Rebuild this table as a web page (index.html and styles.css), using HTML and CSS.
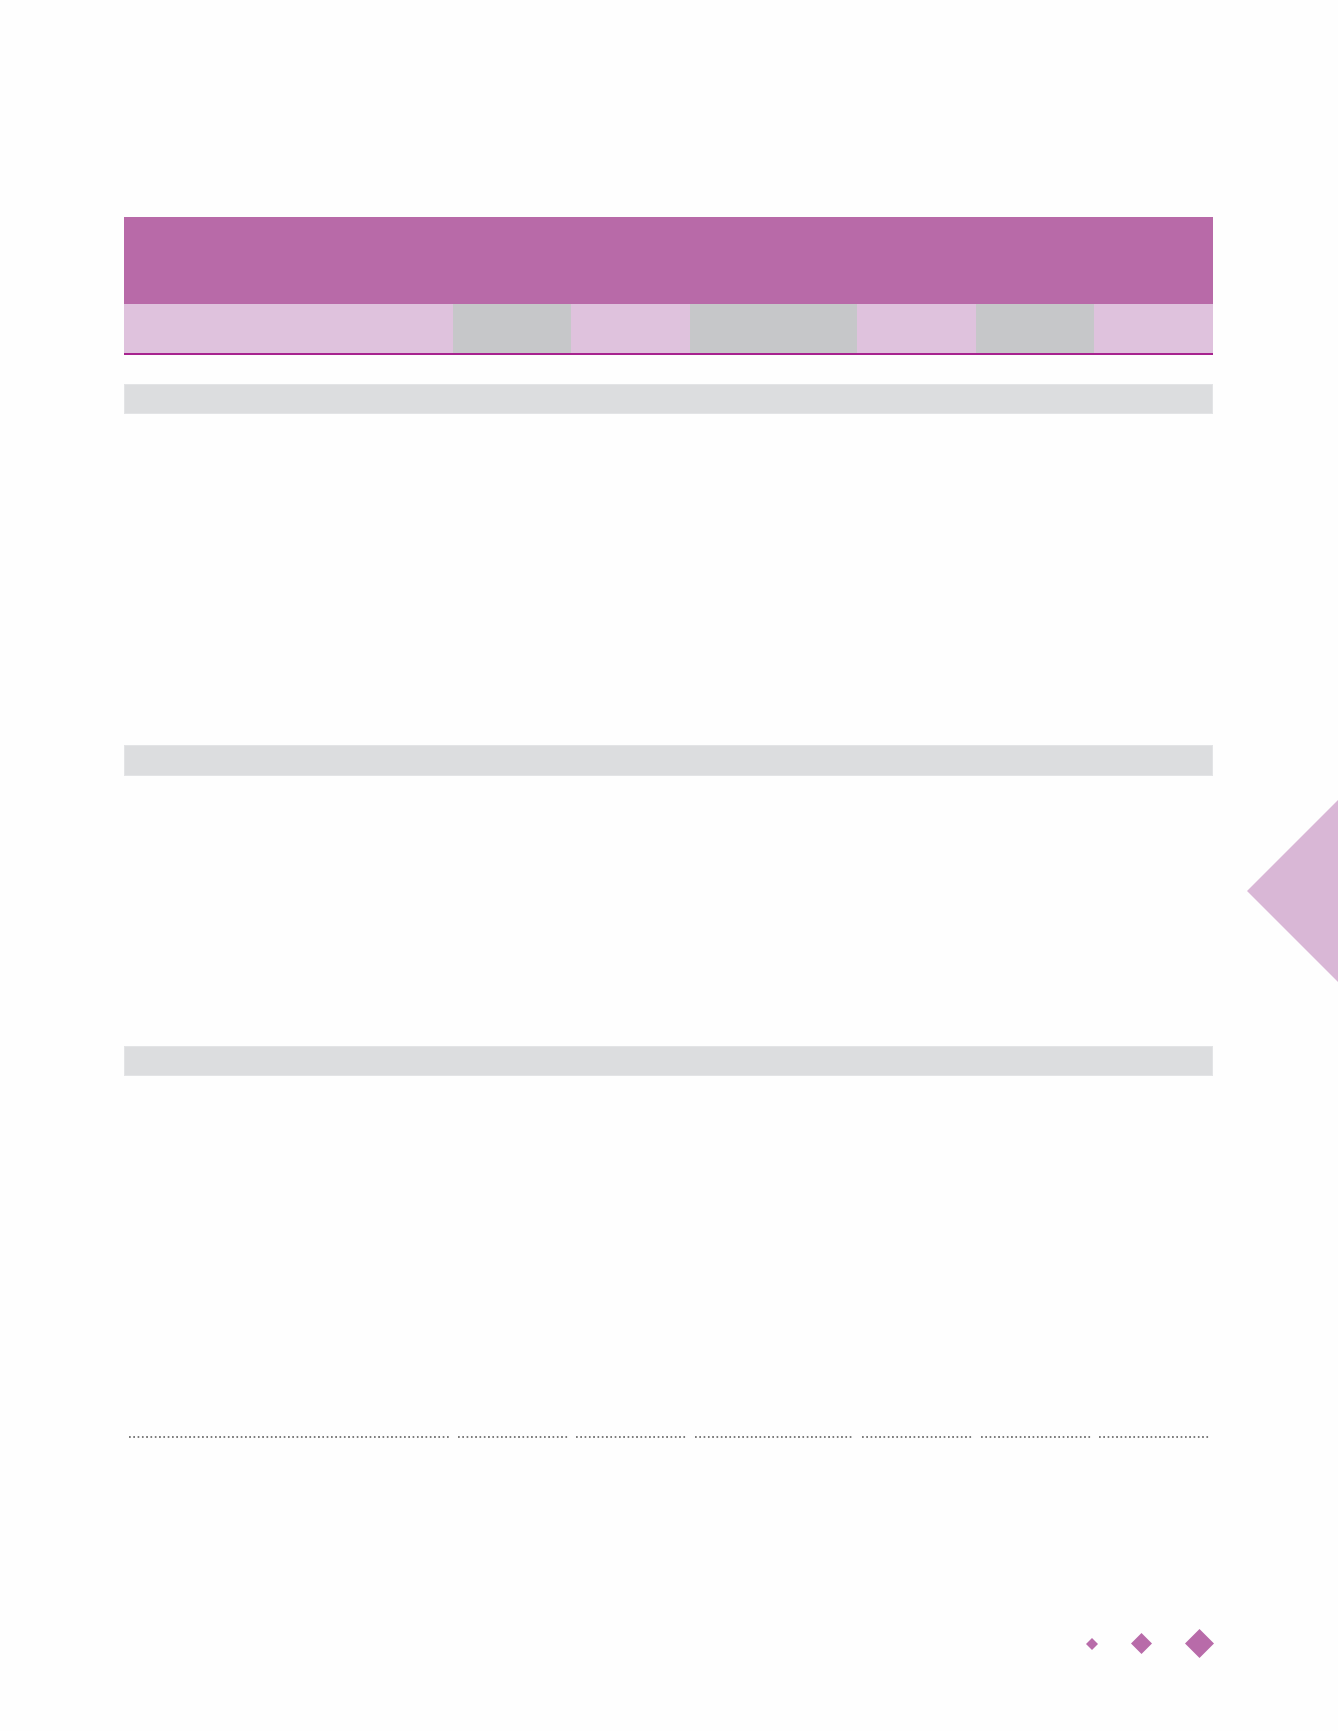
FILE: index.html
```html
<!DOCTYPE html>
<html lang="en">
<head>
<meta charset="utf-8">
<title>Table page</title>
<link rel="stylesheet" href="styles.css">
</head>
<body>
<div class="page">
  <div class="sheet">
    <div class="table-head">
      <div class="head-title"></div>
      <div class="head-cols">
        <div class="hc light wide"></div>
        <div class="hc grey"></div>
        <div class="hc light"></div>
        <div class="hc grey"></div>
        <div class="hc light"></div>
        <div class="hc grey"></div>
        <div class="hc light"></div>
      </div>
    </div>
    <div class="section-bar bar-one"></div>
    <div class="section-bar bar-two"></div>
    <div class="section-bar bar-three"></div>
    <div class="dotted-row">
      <span class="dots"></span>
      <span class="dots"></span>
      <span class="dots"></span>
      <span class="dots"></span>
      <span class="dots"></span>
      <span class="dots"></span>
      <span class="dots"></span>
    </div>
    <div class="diamonds">
      <svg class="dm dm-s" width="12" height="12" viewBox="0 0 12 12"><polygon points="6,0 12,6 6,12 0,6"/></svg>
      <svg class="dm dm-m" width="21" height="21" viewBox="0 0 21 21"><polygon points="10.5,0 21,10.5 10.5,21 0,10.5"/></svg>
      <svg class="dm dm-l" width="29" height="29" viewBox="0 0 29 29"><polygon points="14.5,0 29,14.5 14.5,29 0,14.5"/></svg>
    </div>
  </div>
  <div class="side-tab"></div>
</div>
</body>
</html>
```
FILE: styles.css
```css
html, body {
  margin: 0;
  padding: 0;
  background: #fefefe;
  font-family: "Liberation Sans", Arial, sans-serif;
}

.page {
  position: relative;
  width: 1338px;
  height: 1731px;
  overflow: hidden;
}

.sheet {
  width: 1089px;
  margin-left: 124px;
  padding-top: 217px;
  display: flex;
  flex-direction: column;
}

.table-head {
  display: flex;
  flex-direction: column;
}

.head-title {
  height: 87px;
  background: #b86aa8;
}

.head-cols {
  display: grid;
  grid-template-columns: 329px 118px 119px 167px 119px 118px 119px;
  height: 49px;
  border-bottom: 2.5px solid #a7238f;
}

.hc.light {
  background: #dfc2dd;
}

.hc.grey {
  background: #c6c7c9;
}

.section-bar {
  height: 30px;
  background: #dcdddf;
  box-shadow: inset 0 0 0 1px #e3e4e6;
}

.bar-one {
  margin-top: 29px;
}

.bar-two {
  margin-top: 331px;
  height: 31px;
}

.bar-three {
  margin-top: 270px;
}

.dotted-row {
  margin-top: 360px;
  display: grid;
  grid-template-columns: 329px 118px 119px 167px 119px 118px 119px;
  height: 2px;
}

.dots {
  display: block;
  margin: 0 3px 0 5px;
  height: 1.6px;
  background-image: linear-gradient(to right, #7d7d7d 0, #7d7d7d 1.5px, transparent 1.5px);
  background-size: 4.3px 100%;
  background-repeat: repeat-x;
}

.diamonds {
  margin-top: 191px;
  display: flex;
  justify-content: flex-end;
  align-items: center;
  gap: 33px;
  height: 29px;
}

.dm {
  display: block;
  fill: #b86ba9;
}

.dm-l {
  margin-right: -1px;
}

.side-tab {
  position: absolute;
  top: 800px;
  right: 0;
  width: 91px;
  height: 182px;
  background: #d9b7d6;
  clip-path: polygon(100% 0, 0 50%, 100% 100%);
}
```
